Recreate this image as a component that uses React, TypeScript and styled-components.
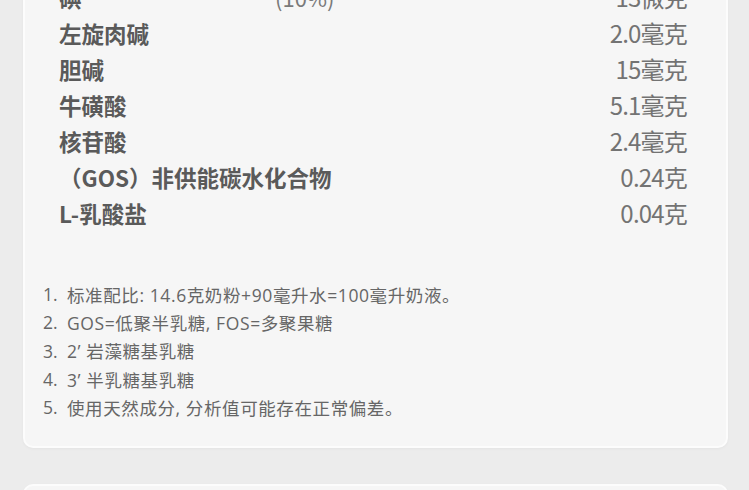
import * as React from 'react';
import styled, { createGlobalStyle } from 'styled-components';

const GlobalStyle = createGlobalStyle`
  html, body {
    margin: 0;
    padding: 0;
    background: #ececec;
    overflow: hidden;
  }
`;

const Page = styled.div`
  width: 749px;
  height: 490px;
  overflow: hidden;
  background: #ececec;
  display: flex;
  flex-direction: column;
  gap: 36px;
  padding: 0 21px 0 23px;
  box-sizing: border-box;
`;

const Card = styled.section<{ top?: boolean }>`
  background: #f6f6f6;
  border: 2px solid #fcfcfc;
  border-radius: 10px;
  box-shadow: 0 1px 3px rgba(0, 0, 0, 0.04);
  margin-top: ${p => (p.top ? '-43px' : '0')};
  padding: ${p => (p.top ? '20px 39px 25px 34px' : '0')};
  min-height: ${p => (p.top ? 'auto' : '60px')};
  flex-shrink: 0;
`;

const Table = styled.div`
  display: flex;
  flex-direction: column;
`;

const Row = styled.div`
  display: grid;
  grid-template-columns: 216px 1fr auto;
  align-items: center;
  height: 36px;
  font-family: "Noto Sans CJK SC", "Noto Sans", sans-serif;
  font-size: 22.5px;
  line-height: 36px;
  white-space: nowrap;
`;

const Name = styled.div<{ wide?: boolean }>`
  grid-column: ${p => (p.wide ? '1 / 3' : '1 / 2')};
  font-weight: 700;
  color: #5a5a5a;
`;

const Pct = styled.div`
  grid-column: 2 / 3;
  color: #7a7a7a;
  font-weight: 400;
  font-size: 22px;
`;

const Value = styled.div`
  grid-column: 3 / 4;
  color: #737373;
  font-weight: 400;
  font-size: 24px;
  text-align: right;
  letter-spacing: -0.8px;
`;

const Notes = styled.ol`
  list-style: none;
  margin: 49px 0 0 -16px;
  padding: 0;
  display: flex;
  flex-direction: column;
`;

const Note = styled.li`
  display: flex;
  height: 28.3px;
  align-items: center;
  font-family: "Open Sans", "Noto Sans CJK SC", sans-serif;
  font-size: 17.5px;
  letter-spacing: 0.6px;
  color: #666;
  white-space: nowrap;
`;

const NoteNum = styled.span`
  width: 24px;
  flex-shrink: 0;
  letter-spacing: 0;
`;

const rows: { name: string; pct?: string; value: string }[] = [
  { name: '碘', pct: '(10%)', value: '13微克' },
  { name: '左旋肉碱', value: '2.0毫克' },
  { name: '胆碱', value: '15毫克' },
  { name: '牛磺酸', value: '5.1毫克' },
  { name: '核苷酸', value: '2.4毫克' },
  { name: '（GOS）非供能碳水化合物', value: '0.24克' },
  { name: 'L-乳酸盐', value: '0.04克' },
];

const notes = [
  '标准配比: 14.6克奶粉+90毫升水=100毫升奶液。',
  'GOS=低聚半乳糖, FOS=多聚果糖',
  '2’ 岩藻糖基乳糖',
  '3’ 半乳糖基乳糖',
  '使用天然成分, 分析值可能存在正常偏差。',
];

export default function App() {
  return (
    <Page>
      <GlobalStyle />
      <Card top>
        <Table>
          {rows.map(r => (
            <Row key={r.name}>
              <Name wide={!r.pct}>{r.name}</Name>
              {r.pct && <Pct>{r.pct}</Pct>}
              <Value>{r.value}</Value>
            </Row>
          ))}
        </Table>
        <Notes>
          {notes.map((n, i) => (
            <Note key={n}>
              <NoteNum>{i + 1}.</NoteNum>
              {n}
            </Note>
          ))}
        </Notes>
      </Card>
      <Card />
    </Page>
  );
}
